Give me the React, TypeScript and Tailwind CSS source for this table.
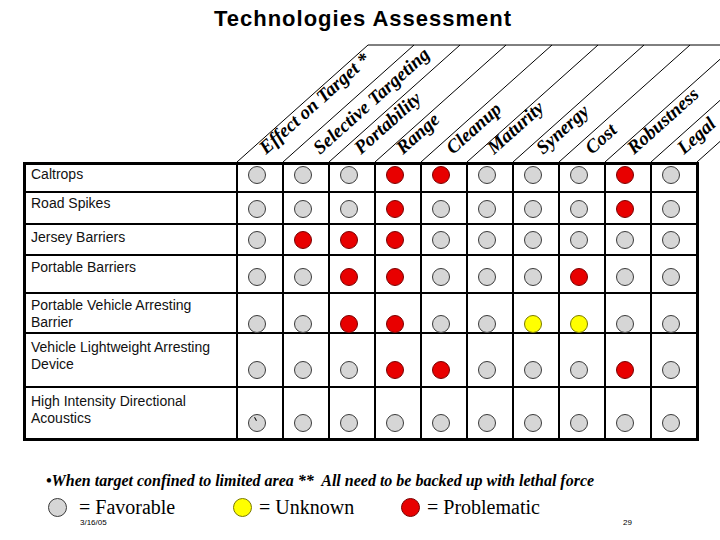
const COLUMNS = [
  { label: 'Effect on Target *', dx: 30 },
  { label: 'Selective Targeting', dx: 38 },
  { label: 'Portability', dx: 33 },
  { label: 'Range', dx: 29 },
  { label: 'Cleanup', dx: 33 },
  { label: 'Maturity', dx: 28 },
  { label: 'Synergy', dx: 31 },
  { label: 'Cost', dx: 34 },
  { label: 'Robustness', dx: 30 },
  { label: 'Legal', dx: 34 },
];

type Rating = 'g' | 'r' | 'y';

interface Row {
  lines: string[];
  height: string;
  textPad: string;
  dotPad: string;
  dots: string;
}

const ROWS: Row[] = [
  { lines: ['Caltrops'], height: 'h-[26px]', textPad: 'pt-[1px]', dotPad: 'pt-[1px]', dots: 'gggrrgggrg' },
  { lines: ['Road Spikes'], height: 'h-[32px]', textPad: 'pt-[2px]', dotPad: 'pt-[7px]', dots: 'gggrggggrg' },
  { lines: ['Jersey Barriers'], height: 'h-[31px]', textPad: 'pt-[4px]', dotPad: 'pt-[6px]', dots: 'grrrgggggg' },
  { lines: ['Portable Barriers'], height: 'h-[38px]', textPad: 'pt-[3px]', dotPad: 'pt-[12px]', dots: 'ggrrgggrgg' },
  { lines: ['Portable Vehicle Arresting', 'Barrier'], height: 'h-[40px]', textPad: 'pt-[3px]', dotPad: 'pt-[21px]', dots: 'ggrrggyygg' },
  { lines: ['Vehicle Lightweight Arresting', 'Device'], height: 'h-[54px]', textPad: 'pt-[5px]', dotPad: 'pt-[27px]', dots: 'gggrrgggrg' },
  { lines: ['High Intensity Directional', 'Acoustics'], height: 'h-[52px]', textPad: 'pt-[5px]', dotPad: 'pt-[26px]', dots: 'gggggggggg' },
];

const DOT_STYLE: Record<Rating, string> = {
  g: 'bg-[#d6d6d6] border-[#3a3a3a]',
  r: 'bg-[#e80000] border-[#7a0000]',
  y: 'bg-[#ffff00] border-[#7a7a00]',
};

const SERIF = "font-['Liberation_Serif','Times_New_Roman',serif]";
const SANS = "font-['Liberation_Sans',Arial,sans-serif]";

function Dot({ rating, size = 'w-[18px] h-[18px]', tick }: { rating: Rating; size?: string; tick?: boolean }) {
  return (
    <div className={`relative rounded-full border ${size} ${DOT_STYLE[rating]}`}>
      {tick && <div className="absolute left-[6px] top-[2px] w-[1px] h-[4px] bg-black rotate-[-30deg]" />}
    </div>
  );
}

// slanted column headings, drawn like the original slide
function SlantHeader() {
  const bottom = 122;
  const rise = 117;
  const run = 131;
  const edges = Array.from({ length: 11 }, (_, i) => 237 + 46 * i);
  return (
    <svg width={720} height={122} className="block">
      <line x1={edges[0] + run} y1={bottom - rise} x2={720} y2={bottom - rise} stroke="#000" strokeWidth={1} />
      {edges.map((x) => (
        <line key={x} x1={x} y1={bottom} x2={x + run} y2={bottom - rise} stroke="#000" strokeWidth={1} />
      ))}
      {COLUMNS.map((c, i) => {
        const x = 236 + 46 * i + c.dx;
        const y = 115;
        return (
          <text
            key={c.label}
            x={x}
            y={y}
            transform={`rotate(-41.8 ${x} ${y})`}
            fontFamily="'Liberation Serif', 'Times New Roman', serif"
            fontWeight="bold"
            fontStyle="italic"
            fontSize={19}
            fill="#000"
          >
            {c.label}
          </text>
        );
      })}
    </svg>
  );
}

export default function App() {
  return (
    <div className="w-[720px] h-[540px] bg-white overflow-hidden text-black">
      <div className="h-[40px] pt-[8px] flex justify-center pl-[6px]">
        <h1 className={`${SANS} text-[22px] leading-[22px] font-bold tracking-[1px]`}>Technologies Assessment</h1>
      </div>

      <SlantHeader />

      <div className="ml-[23px] w-[676px] border-[3px] border-black">
        {ROWS.map((row, ri) => (
          <div key={ri} className={`flex ${row.height} ${ri > 0 ? 'border-t-2 border-black' : ''}`}>
            <div className={`w-[210px] pl-[5px] ${row.textPad} ${SANS} text-[14px] leading-[17px] text-[#111]`}>
              {row.lines.map((l) => (
                <div key={l}>{l}</div>
              ))}
            </div>
            {row.dots.split('').map((d, ci) => (
              <div key={ci} className={`w-[46px] border-l-2 border-black flex justify-center items-start pr-[6px] ${row.dotPad}`}>
                <Dot rating={d as Rating} tick={ri === 6 && ci === 0} />
              </div>
            ))}
          </div>
        ))}
      </div>

      <p className={`mt-[31px] pl-[46px] ${SERIF} italic font-bold text-[16px] leading-[17px]`}>
        •When target confined to limited area **&nbsp; All need to be backed up with lethal force
      </p>

      <div className={`mt-[7px] flex items-center h-[22px] pl-[48px] ${SERIF} text-[20px] leading-[22px]`}>
        <div className="w-[185px] flex items-center">
          <Dot rating="g" size="w-[19px] h-[19px]" />
          <span className="ml-[12px]">= Favorable</span>
        </div>
        <div className="w-[168px] flex items-center">
          <Dot rating="y" size="w-[19px] h-[19px]" />
          <span className="ml-[7px]">= Unknown</span>
        </div>
        <div className="flex items-center">
          <Dot rating="r" size="w-[19px] h-[19px]" />
          <span className="ml-[7px]">= Problematic</span>
        </div>
      </div>

      <div className={`flex pl-[80px] pr-[88px] ${SANS} text-[8px] leading-[10px]`}>
        <span>3/16/05</span>
        <span className="ml-auto">29</span>
      </div>
    </div>
  );
}
